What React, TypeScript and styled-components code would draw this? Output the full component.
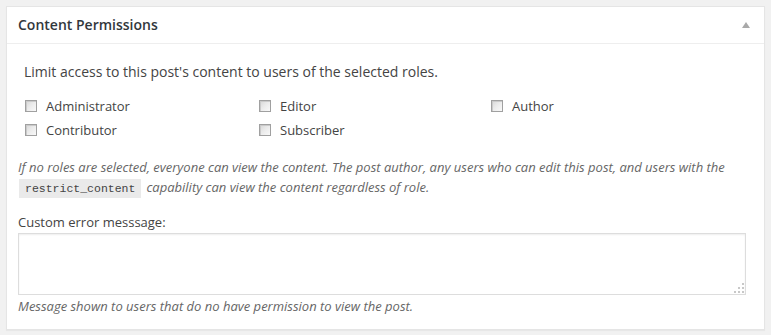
import React from "react";
import styled, { createGlobalStyle } from "styled-components";

const Global = createGlobalStyle`
  html, body { margin: 0; padding: 0; background: #f1f1f1; }
  body { font-family: "Open Sans", "Noto Sans", sans-serif; color: #444; }
  * { box-sizing: border-box; }
`;

const Page = styled.div`
  padding: 6px 6px 6px 6px;
  width: 771px;
`;

const Postbox = styled.div`
  background: #fff;
  border: 1px solid #e5e5e5;
  box-shadow: 0 1px 1px rgba(0, 0, 0, 0.04);
`;

const Header = styled.div`
  height: 37px;
  border-bottom: 1px solid #eeeeee;
  padding: 0 14px 0 11px;
  display: flex;
  align-items: center;
  justify-content: space-between;
`;

const Title = styled.h2`
  margin: 0;
  font-size: 14px;
  font-weight: 600;
  color: #32373c;
  line-height: 1;
  padding-bottom: 1px;
`;

const Toggle = styled.span`
  width: 0;
  height: 0;
  border-left: 4px solid transparent;
  border-right: 4px solid transparent;
  border-bottom: 6px solid #a9a9a9;
`;

const Inside = styled.div`
  padding: 18px 12px 13px 11px;
  display: flex;
  flex-direction: column;
`;

const Intro = styled.p`
  margin: 0 0 12px 0;
  padding-left: 6px;
  font-size: 14px;
  line-height: 20px;
  color: #444;
`;

const RoleGrid = styled.div`
  display: grid;
  grid-template-columns: 234px 232px 1fr;
  grid-auto-rows: 24px;
  padding-left: 7px;
  margin-bottom: 15px;
`;

const RoleLabel = styled.label`
  display: flex;
  align-items: center;
  font-size: 13px;
  color: #444;
  gap: 9px;
`;

const Box = styled.input`
  appearance: none;
  -webkit-appearance: none;
  margin: 0;
  width: 12px;
  height: 12px;
  border: 1px solid #a0a0a0;
  background: linear-gradient(135deg, #d6d6d6 0%, #eaeaea 45%, #f9f9f9 100%);
  box-shadow: inset 1px 1px 0 #cacaca;
  flex: none;
`;

const Description = styled.p`
  margin: 0 0 15px 0;
  font-size: 13px;
  font-style: italic;
  line-height: 20px;
  color: #666;
`;

const Code = styled.code`
  font-family: "Liberation Mono", "DejaVu Sans Mono", monospace;
  font-style: normal;
  font-size: 11.5px;
  line-height: 1;
  background: #eaeaea;
  padding: 3px 6px 3px 6px;
  margin: 0 5px 0 1px;
  color: #444;
`;

const FieldLabel = styled.label`
  font-size: 13px;
  line-height: 20px;
  color: #444;
  margin-bottom: 1px;
`;

const AreaWrap = styled.div`
  position: relative;
  width: 728px;
`;

const Area = styled.textarea`
  display: block;
  width: 100%;
  height: 62px;
  border: 1px solid #dddddd;
  box-shadow: inset 0 1px 2px rgba(0, 0, 0, 0.07);
  resize: none;
  font-family: "Open Sans", sans-serif;
  font-size: 13px;
  margin: 0;
  outline: none;
`;

const Grip = styled.svg`
  position: absolute;
  right: 2px;
  bottom: 2px;
`;

const Note = styled.p`
  margin: 1px 0 0 0;
  font-size: 13px;
  font-style: italic;
  line-height: 20px;
  color: #666;
`;

const roles = ["Administrator", "Editor", "Author", "Contributor", "Subscriber"];

export default function App() {
  return (
    <>
      <Global />
      <Page>
        <Postbox>
          <Header>
            <Title>Content Permissions</Title>
            <Toggle />
          </Header>
          <Inside>
            <Intro>Limit access to this post's content to users of the selected roles.</Intro>
            <RoleGrid>
              {roles.map((r) => (
                <RoleLabel key={r}>
                  <Box type="checkbox" />
                  {r}
                </RoleLabel>
              ))}
            </RoleGrid>
            <Description>
              If no roles are selected, everyone can view the content. The post author, any users who can edit this post, and users with the{" "}
              <Code>restrict_content</Code>
              capability can view the content regardless of role.
            </Description>
            <FieldLabel>Custom error messsage:</FieldLabel>
            <AreaWrap>
              <Area />
              <Grip width="10" height="10" viewBox="0 0 10 10">
                <g fill="#c8c8c8">
                  <rect x="8" y="0" width="2" height="2" />
                  <rect x="4" y="4" width="2" height="2" />
                  <rect x="8" y="4" width="2" height="2" />
                  <rect x="0" y="8" width="2" height="2" />
                  <rect x="4" y="8" width="2" height="2" />
                  <rect x="8" y="8" width="2" height="2" />
                </g>
              </Grip>
            </AreaWrap>
            <Note>Message shown to users that do no have permission to view the post.</Note>
          </Inside>
        </Postbox>
      </Page>
    </>
  );
}
